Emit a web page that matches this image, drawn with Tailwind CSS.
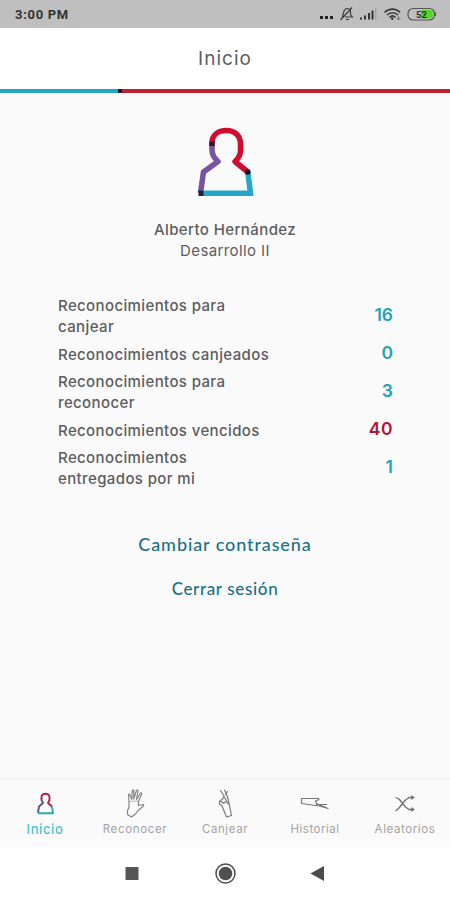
<!DOCTYPE html>
<html lang="es">
<head>
  <meta charset="UTF-8" />
  <meta name="viewport" content="width=device-width, initial-scale=1.0"/>
  <title>Inicio</title>
  <script src="https://cdn.jsdelivr.net/npm/@tailwindcss/browser@4"></script>
</head>
<body class="bg-white">
<div class="w-[450px] h-[900px] flex flex-col overflow-hidden bg-[#fafafa] font-['Inter',sans-serif] text-[#5c5d60]">

  <!-- Status bar -->
  <div class="h-7 shrink-0 bg-[#bfbfbf] flex items-center justify-between pl-[15px] pr-[13px] pt-0.5">
    <span class="font-['Roboto',sans-serif] font-bold text-[13px] tracking-[0.700px] text-[#333]">3:00 PM</span>
    <svg width="120" height="20" viewBox="317 5 120 20" fill="none" stroke="#3c3c3c">
      <g fill="#222" stroke="none">
        <rect x="320" y="16" width="3" height="3"/><rect x="325" y="16" width="3" height="3"/><rect x="330" y="16" width="3" height="3"/>
      </g>
      <path d="M340.5 20L352 7.500M342 17C344 15 342.500 9 347 8.500C349 8.300 350 9.500 350.500 11V14.500L352.500 17H345M346 19.500H349" stroke-width="1.200"/>
      <g fill="#333" stroke="none">
        <rect x="360" y="17.500" width="2" height="2"/><rect x="364" y="15.500" width="2" height="4"/><rect x="368" y="13" width="2" height="6.500"/><rect x="371.500" y="10.500" width="2" height="9"/><rect x="375" y="8" width="1.500" height="11.500" fill="#a5a5a5"/>
      </g>
      <path d="M384.500 12.500C389 8 396 8 400 12.500M387 15C390 12 395 12 398 15M389.500 17.500C391.500 15.500 393.500 15.500 395.500 17.500" stroke-width="1.700"/>
      <circle cx="392.200" cy="18.800" r="1.200" fill="#333" stroke="none"/>
      <path d="M398.500 16V20M398.500 20L396.700 18M398.500 20L400.300 18" stroke="#777" stroke-width="1"/>
      <rect x="408" y="8.500" width="26.500" height="11.500" rx="5" stroke="#555" stroke-width="1.200"/>
      <path d="M421 10H429Q433 10 433 14.250Q433 18.500 429 18.500H421Z" fill="#52d726" stroke="none"/>
      <path d="M435.500 12.500V16" stroke="#555"/>
      <text x="416" y="17.700" font-family="Roboto, sans-serif" font-size="9.500" font-weight="700" fill="#24351c" stroke="none">52</text>
    </svg>
  </div>

  <!-- Header -->
  <header class="h-[61px] shrink-0 bg-white flex items-center justify-center">
    <h1 class="mt-0.5 text-[19px] tracking-[1px]">Inicio</h1>
  </header>
  <div class="h-1 shrink-0 flex">
    <div class="w-[118px] bg-[#22a7c4]"></div>
    <div class="w-1 bg-[#24152f]"></div>
    <div class="flex-1 bg-[#c01f31]"></div>
  </div>

  <main class="flex-1 flex flex-col items-center">
    <!-- Profile -->
    <svg class="mt-[32px] shrink-0" width="60" height="74" viewBox="195 125 60 74" fill="none" stroke-width="5.500" stroke-linejoin="round">
      <path d="M212 144V150C212 155 214 158 218 161.500L203.500 172L200.500 193" stroke="#7654a0"/>
      <path d="M201 193.300H250.500L247.800 172" stroke="#22a7ca" stroke-linejoin="miter"/>
      <path d="M212 144V143C212 135 218 130.500 226.500 130.500C235 130.500 240.500 136 240.500 144V150C240.500 155 238.500 158.500 235 161.500L247.800 172" stroke="#d00c2e"/>
      <path d="M212 141.500V146" stroke="#3f1236"/>
      <circle cx="247.800" cy="172" r="2.800" fill="#160d20"/>
      <rect x="198.500" y="190.500" width="5" height="5.500" fill="#241b45"/>
    </svg>
    <div class="mt-[20px] text-center leading-[21px]">
      <p class="text-[15px] font-medium tracking-[0.400px]">Alberto Hernández</p>
      <p class="text-[15px] tracking-[0.400px]">Desarrollo II</p>
    </div>

    <!-- Totals -->
    <ul class="mt-[34px] w-[450px] pl-[58px] pr-[57px] flex flex-col gap-[6.500px] text-[15px] font-medium tracking-[0.380px] leading-[21px]">
      <li class="flex items-center justify-between">
        <span>Reconocimientos para<br>canjear</span>
        <span class="text-[17.500px] font-semibold tracking-normal -mt-[3px] text-[#22a3b8]">16</span>
      </li>
      <li class="flex items-center justify-between">
        <span>Reconocimientos canjeados</span>
        <span class="text-[17.500px] font-semibold tracking-normal -mt-[3px] text-[#22a3b8]">0</span>
      </li>
      <li class="flex items-center justify-between">
        <span>Reconocimientos para<br>reconocer</span>
        <span class="text-[17.500px] font-semibold tracking-normal -mt-[3px] text-[#22a3b8]">3</span>
      </li>
      <li class="flex items-center justify-between">
        <span>Reconocimientos vencidos</span>
        <span class="text-[17.500px] font-semibold tracking-[0.500px] -mt-[3px] text-[#b51236]">40</span>
      </li>
      <li class="flex items-center justify-between">
        <span>Reconocimientos<br>entregados por mi</span>
        <span class="text-[17.500px] font-semibold tracking-normal -mt-[3px] text-[#22a3b8]">1</span>
      </li>
    </ul>

    <!-- Account links -->
    <a href="#" class="mt-[43px] font-['Lato',sans-serif] text-[18px] leading-[24px] font-medium tracking-[0.900px] text-[#1b7188]">Cambiar contraseña</a>
    <a href="#" class="mt-[21px] font-['Lato',sans-serif] text-[17px] leading-[24px] font-medium tracking-[0.650px] text-[#1b7188]">Cerrar sesión</a>
  </main>

  <!-- Tab bar -->
  <nav class="h-[69px] shrink-0 border-t-2 border-[#f3f3f3] grid grid-cols-5 pt-[9px] text-[11.500px] leading-[17px] text-[#a3a3a3]">
    <a href="#" class="flex flex-col items-center gap-[3px] text-[#4cc3cf]">
      <svg width="30" height="29" viewBox="30 789 30 29" fill="none" stroke-width="1.900" stroke-linejoin="round">
        <path d="M41.500 798V800L43 803L39 806.500L38 813" stroke="#65517f"/>
        <path d="M38 813.300H53L52 806.500" stroke="#2ba8bf"/>
        <path d="M41.500 799V797.500C41.500 792.500 49.500 792.500 49.500 797.500V800L48 803L52 806.500" stroke="#b32449"/>
      </svg>
      <span class="text-[13px] font-medium tracking-[0.600px]">Inicio</span>
    </a>
    <a href="#" class="flex flex-col items-center gap-[3px]">
      <svg width="30" height="29" viewBox="120 789 30 29" fill="none" stroke="#858585" stroke-width="1.200" stroke-linejoin="round" stroke-linecap="round">
        <path d="M129 801.500L128.500 795Q129 793 130 795L131.800 799.500L132.300 790.500Q133.200 789 133.800 790.500V799L136.500 790.300Q137.800 789.500 138 791L136.500 799.500L140.500 793Q142 792.500 141.700 794L138.500 801.500V805.500L143 804.500Q144.500 805 143 806.500L138 810.500L135.500 814L131.500 817L127.500 814.500V811L129 806.500Z"/>
        <path d="M129 801.500L137.500 801" stroke="#aaa" stroke-width="0.800"/>
      </svg>
      <span class="tracking-[0.650px]">Reconocer</span>
    </a>
    <a href="#" class="flex flex-col items-center gap-[3px]">
      <svg width="30" height="29" viewBox="210 789 30 29" fill="none" stroke="#7c7c7c" stroke-width="1.200" stroke-linejoin="round" stroke-linecap="round">
        <path d="M220.500 790.500L224 796L223.500 798L219.500 801.500V804L222 806L226.500 817L231.500 815.500L229 803L227.500 797L226 793L224.500 790M227.500 791.500L225.500 794.500M224 796.500L226.500 801L223.500 803.500L220.500 801M226.500 801L228 804"/>
      </svg>
      <span class="tracking-[0.600px]">Canjear</span>
    </a>
    <a href="#" class="flex flex-col items-center gap-[3px]">
      <svg width="30" height="29" viewBox="300 789 30 29" fill="none" stroke="#777" stroke-width="1.200" stroke-linejoin="round" stroke-linecap="round">
        <path d="M301.500 798.500H318.500Q319.500 799.500 318 800L315.500 801L316.500 803.500L328 808.500L319.500 806L312 805L301.500 803.500ZM316.500 804.500H326.500"/>
      </svg>
      <span class="tracking-[0.500px]">Historial</span>
    </a>
    <a href="#" class="flex flex-col items-center gap-[3px]">
      <svg width="30" height="29" viewBox="390 789 30 29" fill="none" stroke="#707070" stroke-width="1.300" stroke-linejoin="round">
        <path d="M395.500 797.500L399 799L405.500 807L409 809.500H413M395.500 811L399 808L405.500 800L409 797.500H413"/>
        <path d="M411.500 795.500L414.500 797.500L411.500 799.500ZM411.500 807.500L414.500 809.500L411.500 811.500Z" fill="#707070" stroke-width="0.500"/>
      </svg>
      <span class="tracking-[0.600px]">Aleatorios</span>
    </a>
  </nav>

  <!-- System buttons -->
  <div class="h-[53px] shrink-0 bg-white flex justify-center">
    <svg width="220" height="53" viewBox="115 847 220 53">
      <rect x="125.500" y="867" width="13" height="13" fill="#555"/>
      <circle cx="225.500" cy="873.500" r="9.500" fill="none" stroke="#505050" stroke-width="1.500"/>
      <circle cx="225.500" cy="873.500" r="6.800" fill="#505050"/>
      <path d="M310.500 873.500L324 866V881Z" fill="#4c4c4c"/>
    </svg>
  </div>
</div>
</body>
</html>
